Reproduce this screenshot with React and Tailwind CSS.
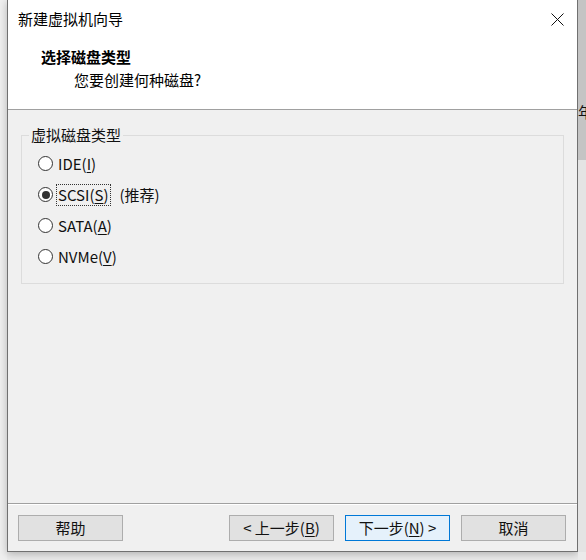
import React, { useState } from 'react';

const font = { fontFamily: '"Noto Sans CJK SC", "Noto Sans", sans-serif' };

function Radio({ checked, children, focused, onClick }) {
  return (
    <div className="flex h-[31px] items-center cursor-default" onClick={onClick}>
      <div className="ml-[16px] flex h-[15px] w-[15px] items-center justify-center rounded-full border border-[#333333] bg-white">
        {checked && <div className="h-[8px] w-[8px] rounded-full bg-[#333333]" />}
      </div>
      {children(focused)}
    </div>
  );
}

const options = [
  { key: 'ide', label: 'IDE(', acc: 'I', tail: ')' },
  { key: 'scsi', label: 'SCSI(', acc: 'S', tail: ')', extra: '(推荐)' },
  { key: 'sata', label: 'SATA(', acc: 'A', tail: ')' },
  { key: 'nvme', label: 'NVMe(', acc: 'V', tail: ')' },
];

function Button({ primary, children }) {
  return (
    <button
      className={
        'flex h-[26px] w-[105px] items-center justify-center border text-[15px] text-[#111] ' +
        (primary ? 'border-[#0078d7] bg-[#e5f1fb]' : 'border-[#adadad] bg-[#e1e1e1]')
      }
    >
      {children}
    </button>
  );
}

export default function App() {
  const [type, setType] = useState('scsi');

  return (
    <div className="flex h-[560px] w-[586px] overflow-hidden bg-[#ebebeb]" style={font}>
      <div className="w-[7px] shrink-0 bg-[#efefef]" />

      {/* dialog */}
      <div className="flex h-[552px] w-[571px] shrink-0 flex-col border-x border-b border-[#707070] bg-[#f0f0f0] shadow-[0_2px_8px_rgba(0,0,0,0.25)]">
        <div className="h-[109px] bg-white">
          <div className="flex h-[38px] items-center justify-between pl-[10px] pr-[13px]">
            <span className="text-[15px] leading-5 text-black">新建虚拟机向导</span>
            <svg width="13" height="13" viewBox="0 0 13 13" className="mt-[1px]">
              <path d="M0.5 0.5 L12.5 12.5 M12.5 0.5 L0.5 12.5" stroke="#111" strokeWidth="1" />
            </svg>
          </div>
          <div className="pt-[9px] pl-[33px] text-[15px] leading-5 font-bold text-black">选择磁盘类型</div>
          <div className="pt-[3px] pl-[66px] text-[15px] leading-5 text-black">您要创建何种磁盘?</div>
        </div>
        <div className="h-px bg-[#a0a0a0]" />

        <div className="flex-1">
          <fieldset className="mx-[13px] mt-[15px] border border-[#dcdcdc] pb-[11px]">
            <legend className="ml-[7px] px-[2px] text-[15px] leading-5 text-[#111]">虚拟磁盘类型</legend>
            <div className="pt-[3px]">
              {options.map((o) => (
                <Radio key={o.key} checked={type === o.key} focused={o.key === 'scsi'} onClick={() => setType(o.key)}>
                  {(focused) => (
                    <div className="ml-[4px] flex items-center text-[15px] leading-5 text-[#111]">
                      <span className={focused ? 'px-[1px] outline outline-1 outline-dotted outline-[#333]' : 'px-[1px]'}>
                        {o.label}
                        <span className="underline underline-offset-2">{o.acc}</span>
                        {o.tail}
                      </span>
                      {o.extra && <span className="ml-[10px]">{o.extra}</span>}
                    </div>
                  )}
                </Radio>
              ))}
            </div>
          </fieldset>
        </div>

        <div className="h-[48px] border-t border-[#a0a0a0]">
          <div className="h-px bg-white" />
          <div className="flex items-center pt-[10px] pl-[10px] pr-[11px]">
            <Button>帮助</Button>
            <div className="ml-auto flex gap-[11px]">
              <Button>
                &lt;&nbsp;上一步(<span className="underline underline-offset-2">B</span>)
              </Button>
              <Button primary>
                下一步(<span className="underline underline-offset-2">N</span>)&nbsp;&gt;
              </Button>
              <Button>取消</Button>
            </div>
          </div>
        </div>
      </div>

      {/* edge of the window behind */}
      <div className="flex w-[8px] shrink-0 flex-col overflow-hidden">
        <div className="h-[160px] bg-[#c4c4c4] pt-[102px]">
          <span className="block w-[20px] text-[15px] leading-5 text-[#111]">年</span>
        </div>
        <div className="h-[392px] bg-[#e4e4e4]" />
        <div className="flex-1 bg-[#ebebeb]" />
      </div>
    </div>
  );
}
